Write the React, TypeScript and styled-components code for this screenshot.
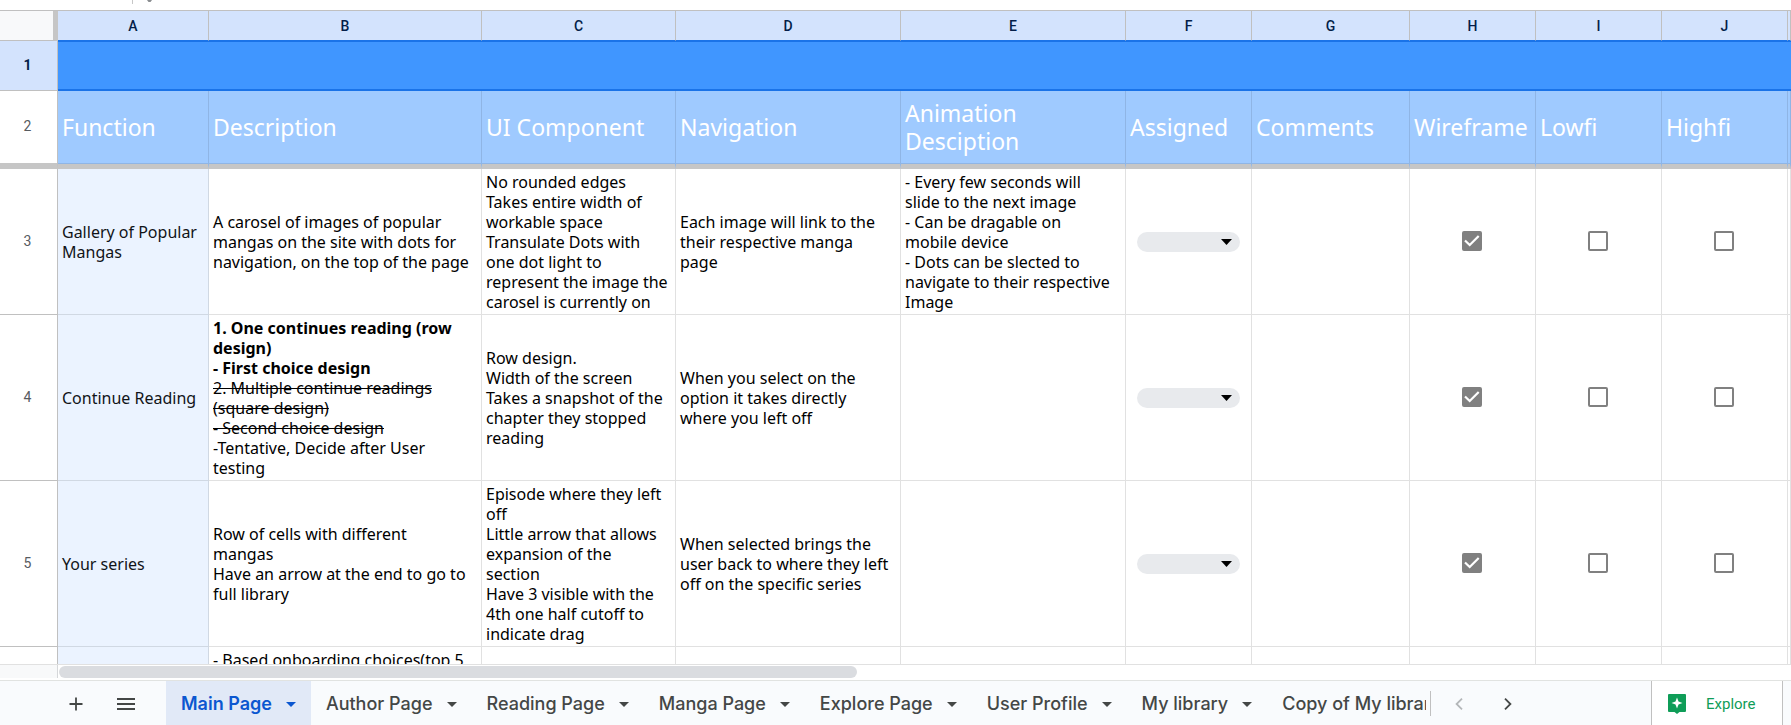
import React, { useState } from 'react';
import styled, { createGlobalStyle, css } from 'styled-components';

const GlobalStyle = createGlobalStyle`
  *, *::before, *::after { box-sizing: border-box; }
  html, body { margin: 0; padding: 0; }
  body { background: #fff; color: #000; font-family: "Noto Sans", sans-serif; }
  button, select, input { font: inherit; margin: 0; }
`;

const Page = styled.div`
  display: flex;
  flex-direction: column;
  height: 100vh;
  min-width: 0;
  overflow: hidden;
`;

const FormulaBar = styled.div`
  display: flex;
  flex: none;
  align-items: flex-start;
  height: 11px;
  padding-left: 132px;
  gap: 14px;
  border-bottom: 1px solid #c0c0c0;
`;

const FormulaDivider = styled.span`
  width: 1px;
  height: 4px;
  background: #c7c7c7;
`;

const FormulaGlyph = styled.svg`
  display: block;
  width: 5px;
  height: 2px;
`;

const SheetViewport = styled.main`
  flex: 1;
  min-height: 0;
  overflow: hidden;
  border-bottom: 1px solid #e1e1e1;
`;

const Sheet = styled.table`
  width: 100%;
  table-layout: fixed;
  border-collapse: separate;
  border-spacing: 0;
`;

const Column = styled.col<{ $width?: number }>`
  width: ${p => (p.$width ? `${p.$width}px` : 'auto')};
`;

const Corner = styled.td`
  height: 30px;
  padding: 0;
  background: #f8f9fa;
  border-right: 5px solid #c6c6c6;
  border-bottom: 1px solid #c0c0c0;
`;

const ColumnLetter = styled.th`
  height: 30px;
  padding: 0;
  font: 500 14px/20px Roboto, sans-serif;
  color: #041e49;
  text-align: center;
  background: #d3e3fd;
  border-right: 1px solid #c0c0c0;
  border-bottom: 1px solid #1a73e8;
`;

const RowNumber = styled.th<{ $selected?: boolean; $frozenEdge?: boolean }>`
  padding: 0 2px 2px 0;
  font: ${p => (p.$selected ? 700 : 400)} 14px/20px Roboto, sans-serif;
  color: ${p => (p.$selected ? '#041e49' : '#575b5f')};
  text-align: center;
  vertical-align: middle;
  background: ${p => (p.$selected ? '#d3e3fd' : '#fff')};
  border-right: 1px solid #c0c0c0;
  border-bottom: 1px solid #c0c0c0;
  ${p => p.$frozenEdge && css`border-bottom: 6px solid #c6c6c6;`}
`;

const Banner = styled.td`
  height: 50px;
  padding: 0;
  background: #4096ff;
  border-top: 1px solid #1a73e8;
  border-bottom: 2px solid #1a73e8;
`;

const TitleCell = styled.td`
  height: 78px;
  padding: 0 4px 2px;
  font-size: 23px;
  line-height: 28px;
  color: #fff;
  white-space: pre;
  vertical-align: middle;
  overflow: hidden;
  background: #9fcaff;
  border-right: 1px solid #8fb5e5;
  border-bottom: 5px solid #c6c6c6;
  box-shadow: inset 0 -1px #8fb5e5;
`;

const Cell = styled.td<{ $tinted?: boolean; $centered?: boolean; $top?: boolean }>`
  padding: 3px 4px 2px;
  font-size: 16px;
  line-height: 20px;
  white-space: pre;
  overflow: hidden;
  text-align: ${p => (p.$centered ? 'center' : 'left')};
  vertical-align: ${p => (p.$top ? 'top' : 'middle')};
  color: ${p => (p.$tinted ? '#111418' : '#000')};
  background: ${p => (p.$tinted ? '#ebf3ff' : '#fff')};
  border-right: 1px solid ${p => (p.$tinted ? '#d0d8e3' : '#e1e1e1')};
  border-bottom: 1px solid ${p => (p.$tinted ? '#d0d8e3' : '#e1e1e1')};
`;

const Row = styled.tr<{ $height: number }>`
  height: ${p => p.$height}px;
`;

const ChipSelect = styled.select`
  appearance: none;
  display: block;
  width: 103px;
  height: 20px;
  margin: 0 auto;
  padding: 0 24px 0 10px;
  border: 0;
  border-radius: 10px;
  color: #000;
  background: #e8eaed;
`;

const ChipWrap = styled.span`
  position: relative;
  display: block;
`;

const ChipArrow = styled.svg`
  position: absolute;
  right: 15px;
  top: 7px;
  width: 11px;
  height: 6px;
  pointer-events: none;
`;

const Tick = styled.label`
  display: grid;
  place-items: center;
  padding: 0 2px 2px 0;
  > * { grid-area: 1 / 1; }
`;

const TickInput = styled.input`
  appearance: none;
  width: 20px;
  height: 20px;
  border: 2px solid #808080;
  border-radius: 2px;
  background: #fff;
  &:checked { background: #808080; }
  &:not(:checked) + svg { visibility: hidden; }
`;

const TickMark = styled.svg`
  display: block;
  width: 20px;
  height: 20px;
  pointer-events: none;
`;

const Scroller = styled.div`
  display: flex;
  flex: none;
  height: 15px;
  background: #fff;
`;

const ScrollerGutter = styled.div`
  width: 58px;
  height: 13px;
  background: #f8f9fa;
  border-right: 1px solid #d5d7d9;
`;

const ScrollThumb = styled.div`
  width: 46%;
  max-width: 798px;
  height: 12px;
  margin: 1px;
  border-radius: 6px;
  background: #dadce0;
`;

const BottomBar = styled.footer`
  display: flex;
  flex: none;
  height: 45px;
  background: #f9fbfd;
  border-top: 1px solid #e1e3e1;
`;

const SheetTools = styled.div`
  display: flex;
  flex: none;
  align-items: center;
  width: 166px;
  padding: 2px 0 0 64px;
  gap: 26px;
`;

const IconButton = styled.button`
  display: flex;
  align-items: center;
  justify-content: center;
  width: 24px;
  height: 24px;
  padding: 0;
  border: 0;
  color: #444746;
  background: none;
  &:disabled { color: #b4b7b9; }
`;

const TabStrip = styled.nav`
  display: flex;
  flex: 0 1 1260px;
  min-width: 0;
  overflow: hidden;
`;

const Tab = styled.button<{ $active?: boolean }>`
  display: flex;
  flex: none;
  align-items: center;
  gap: 14px;
  padding: 2px 15px 0;
  border: 0;
  font: ${p => (p.$active ? 600 : 500)} 18px/24px Inter, sans-serif;
  color: ${p => (p.$active ? '#0b57d0' : '#444746')};
  background: ${p => (p.$active ? '#e1e9f7' : 'transparent')};
  white-space: nowrap;
`;

const TabArrow = styled.svg`
  display: block;
  width: 10px;
  height: 5px;
`;

const TabPager = styled.div`
  display: flex;
  flex: none;
  align-items: center;
  gap: 25px;
  padding-left: 16px;
  margin: 10px 0 9px 4px;
  border-left: 1px solid #c0c0c0;
`;

const ExploreButton = styled.button`
  display: flex;
  flex: none;
  align-items: center;
  gap: 20px;
  width: 132px;
  margin: 0 8px 0 auto;
  padding: 2px 0 0 16px;
  border: 0;
  border-left: 1px solid #c0c0c0;
  border-right: 1px solid #c0c0c0;
  font: 400 15px/20px Roboto, sans-serif;
  color: #0f9d58;
  background: #fff;
`;

const columns = [
  { letter: 'A', width: 151, title: 'Function' },
  { letter: 'B', width: 273, title: 'Description' },
  { letter: 'C', width: 194, title: 'UI Component' },
  { letter: 'D', width: 225, title: 'Navigation' },
  { letter: 'E', width: 225, title: 'Animation\nDesciption' },
  { letter: 'F', width: 126, title: 'Assigned' },
  { letter: 'G', width: 158, title: 'Comments' },
  { letter: 'H', width: 126, title: 'Wireframe' },
  { letter: 'I', width: 126, title: 'Lowfi' },
  { letter: 'J', width: 126, title: 'Highfi' },
];

interface Entry {
  number: number;
  height: number;
  name: string;
  description: React.ReactNode;
  component: string;
  navigation: string;
  animation: string;
}

const entries: Entry[] = [
  {
    number: 3,
    height: 146,
    name: 'Gallery of Popular\nMangas',
    description:
      'A carosel of images of popular\nmangas on the site with dots for\nnavigation, on the top of the page',
    component:
      'No rounded edges\nTakes entire width of\nworkable space\nTransulate Dots with\none dot light to\nrepresent the image the\ncarosel is currently on',
    navigation: 'Each image will link to the\ntheir respective manga\npage',
    animation:
      '- Every few seconds will\nslide to the next image\n- Can be dragable on\nmobile device\n- Dots can be slected to\nnavigate to their respective\nImage',
  },
  {
    number: 4,
    height: 166,
    name: 'Continue Reading',
    description: (
      <>
        <b>{'1. One continues reading (row\ndesign)\n- First choice design\n'}</b>
        <s>{'2. Multiple continue readings\n(square design)\n- Second choice design'}</s>
        {'\n-Tentative, Decide after User\ntesting'}
      </>
    ),
    component:
      'Row design.\nWidth of the screen\nTakes a snapshot of the\nchapter they stopped\nreading',
    navigation: 'When you select on the\noption it takes directly\nwhere you left off',
    animation: '',
  },
  {
    number: 5,
    height: 166,
    name: 'Your series',
    description:
      'Row of cells with different\nmangas\nHave an arrow at the end to go to\nfull library',
    component:
      'Episode where they left\noff\nLittle arrow that allows\nexpansion of the\nsection\nHave 3 visible with the\n4th one half cutoff to\nindicate drag',
    navigation: 'When selected brings the\nuser back to where they left\noff on the specific series',
    animation: '',
  },
];

const tabs = [
  'Main Page',
  'Author Page',
  'Reading Page',
  'Manga Page',
  'Explore Page',
  'User Profile',
  'My library',
  'Copy of My library',
];

function AssigneeChip({ row }: { row: number }) {
  return (
    <ChipWrap>
      <ChipSelect aria-label={`Assigned, row ${row}`} defaultValue="">
        <option value="" aria-label="Unassigned" />
      </ChipSelect>
      <ChipArrow viewBox="0 0 11 6" aria-hidden="true">
        <path d="M0 0h11L5.500 6z" fill="#000" />
      </ChipArrow>
    </ChipWrap>
  );
}

function StatusTick({ label, done }: { label: string; done?: boolean }) {
  return (
    <Tick>
      <TickInput type="checkbox" aria-label={label} defaultChecked={done} />
      <TickMark viewBox="0 0 20 20" aria-hidden="true">
        <path d="M3 9.500l4.700 4.500 9-9" fill="none" stroke="#fff" strokeWidth="2.200" />
      </TickMark>
    </Tick>
  );
}

export default function App() {
  const [activeTab, setActiveTab] = useState('Main Page');

  return (
    <Page>
      <GlobalStyle />
      <FormulaBar>
        <FormulaDivider />
        <FormulaGlyph viewBox="0 0 5 2" aria-hidden="true">
          <path d="M0 0h5L3.500 2h-2z" fill="#8a8d90" />
        </FormulaGlyph>
      </FormulaBar>

      <SheetViewport>
        <Sheet>
          <colgroup>
            <Column $width={58} />
            {columns.map(c => (
              <Column key={c.letter} $width={c.width} />
            ))}
            <Column />
          </colgroup>
          <thead>
            <tr>
              <Corner />
              {columns.map(c => (
                <ColumnLetter key={c.letter} scope="col">
                  {c.letter}
                </ColumnLetter>
              ))}
              <ColumnLetter aria-label="K" />
            </tr>
            <tr>
              <RowNumber scope="row" $selected>
                1
              </RowNumber>
              <Banner colSpan={11} />
            </tr>
            <tr>
              <RowNumber scope="row" $frozenEdge>
                2
              </RowNumber>
              {columns.map(c => (
                <TitleCell key={c.letter}>{c.title}</TitleCell>
              ))}
              <TitleCell />
            </tr>
          </thead>
          <tbody>
            {entries.map(e => (
              <Row key={e.number} $height={e.height}>
                <RowNumber scope="row">{e.number}</RowNumber>
                <Cell $tinted>{e.name}</Cell>
                <Cell>{e.description}</Cell>
                <Cell>{e.component}</Cell>
                <Cell>{e.navigation}</Cell>
                <Cell>{e.animation}</Cell>
                <Cell $centered>
                  <AssigneeChip row={e.number} />
                </Cell>
                <Cell />
                <Cell $centered>
                  <StatusTick label={`Wireframe, row ${e.number}`} done />
                </Cell>
                <Cell $centered>
                  <StatusTick label={`Lowfi, row ${e.number}`} />
                </Cell>
                <Cell $centered>
                  <StatusTick label={`Highfi, row ${e.number}`} />
                </Cell>
                <Cell />
              </Row>
            ))}
            <Row $height={166}>
              <RowNumber aria-label="6" />
              <Cell $tinted />
              <Cell $top>- Based onboarding choices(top 5</Cell>
              {columns.slice(2).map(c => (
                <Cell key={c.letter} />
              ))}
              <Cell />
            </Row>
          </tbody>
        </Sheet>
      </SheetViewport>

      <Scroller>
        <ScrollerGutter />
        <ScrollThumb />
      </Scroller>

      <BottomBar>
        <SheetTools>
          <IconButton aria-label="Add sheet">
            <svg width="14" height="14" viewBox="0 0 14 14" aria-hidden="true">
              <path d="M7 0.500v13M0.500 7h13" stroke="currentColor" strokeWidth="1.800" />
            </svg>
          </IconButton>
          <IconButton aria-label="All sheets">
            <svg width="18" height="12" viewBox="0 0 18 12" aria-hidden="true">
              <path d="M0 1h18M0 6h18M0 11h18" stroke="currentColor" strokeWidth="1.800" />
            </svg>
          </IconButton>
        </SheetTools>
        <TabStrip aria-label="Sheets">
          {tabs.map(name => (
            <Tab
              key={name}
              $active={name === activeTab}
              aria-current={name === activeTab ? 'page' : undefined}
              onClick={() => setActiveTab(name)}
            >
              {name}
              <TabArrow viewBox="0 0 10 5" aria-hidden="true">
                <path d="M0 0h10L5 5z" fill="currentColor" />
              </TabArrow>
            </Tab>
          ))}
        </TabStrip>
        <TabPager>
          <IconButton aria-label="Scroll tabs left" disabled>
            <svg width="8" height="12" viewBox="0 0 8 12" aria-hidden="true">
              <path d="M7 0.700L1.600 6 7 11.300" fill="none" stroke="currentColor" strokeWidth="1.800" />
            </svg>
          </IconButton>
          <IconButton aria-label="Scroll tabs right">
            <svg width="8" height="12" viewBox="0 0 8 12" aria-hidden="true">
              <path d="M1 0.700L6.400 6 1 11.300" fill="none" stroke="currentColor" strokeWidth="1.800" />
            </svg>
          </IconButton>
        </TabPager>
        <ExploreButton>
          <svg width="18" height="20" viewBox="0 0 18 20" aria-hidden="true">
            <path
              d="M1 0h16a1 1 0 0 1 1 1v16a1 1 0 0 1-1 1h-5.500L9 20l-2.500-2H1a1 1 0 0 1-1-1V1a1 1 0 0 1 1-1z"
              fill="#0f9d58"
            />
            <path d="M9 3.500l1.500 4L14.500 9l-4 1.500L9 14.500l-1.500-4L3.500 9l4-1.500z" fill="#fff" />
          </svg>
          Explore
        </ExploreButton>
      </BottomBar>
    </Page>
  );
}
